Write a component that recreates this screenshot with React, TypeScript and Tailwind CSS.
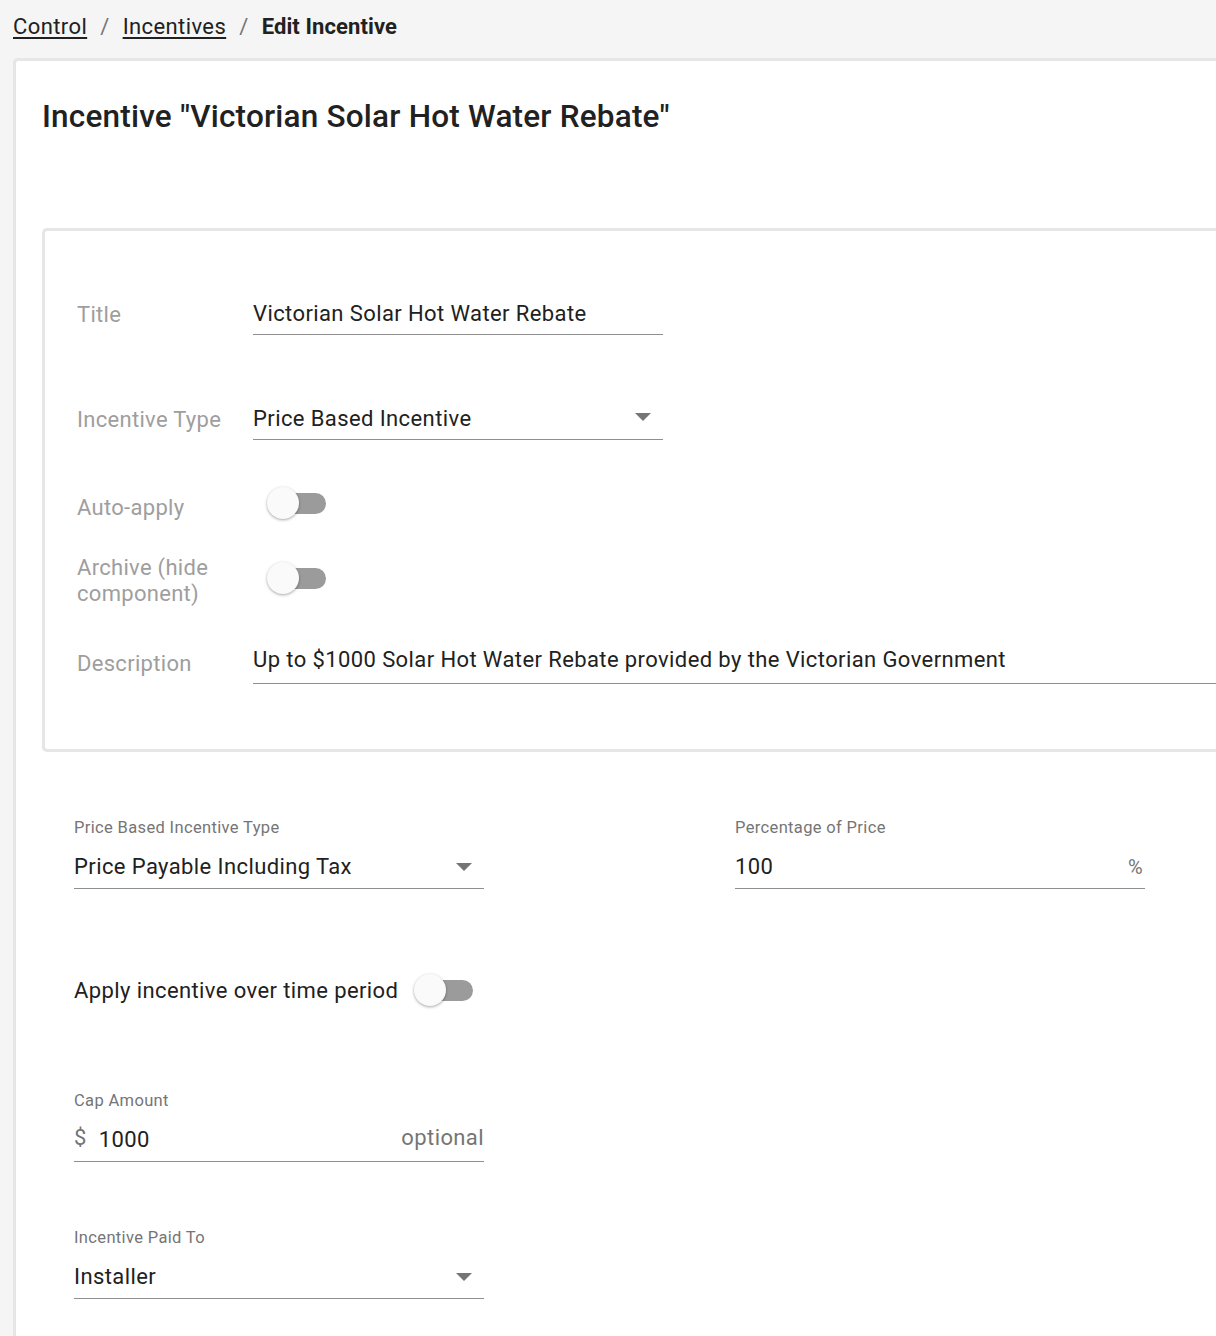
import React from 'react';

const Toggle: React.FC = () => (
  <div className="relative w-[60px] h-[32px] flex items-center">
    <div className="absolute left-[14px] w-[45px] h-[21px] rounded-full bg-[#9b9b9b]" />
    <div className="absolute left-0 w-[32px] h-[32px] rounded-full bg-[#fafafa] shadow-[0_1px_3px_rgba(0,0,0,0.35)]" />
  </div>
);

const Arrow: React.FC = () => (
  <svg width="16" height="8" viewBox="0 0 16 8" className="shrink-0">
    <path d="M0 0 L16 0 L8 8 Z" fill="#757575" />
  </svg>
);

const PanelRow: React.FC<{ label: React.ReactNode; className?: string; children: React.ReactNode }> = ({ label, className, children }) => (
  <div className={`flex items-center ${className ?? ''}`}>
    <div className="w-[176px] shrink-0 text-[22px] tracking-[0.3px] leading-[26px] text-[#9e9e9e]">{label}</div>
    {children}
  </div>
);

const SmallLabel: React.FC<{ children: React.ReactNode }> = ({ children }) => (
  <div className="text-[16.5px] tracking-[0.35px] leading-[20px] text-[#757575]">{children}</div>
);

export default function App() {
  return (
    <div className="min-h-screen overflow-hidden bg-[#f5f5f5] text-[#212121] font-['Roboto',sans-serif]">
      {/* Breadcrumb */}
      <div className="h-[58px] pl-[13px] pt-[13px] flex items-start gap-[13px] text-[22px] tracking-[0.4px] leading-[28px]">
        <span className="underline underline-offset-[3px]">Control</span>
        <span className="text-[#757575]">/</span>
        <span className="underline underline-offset-[3px]">Incentives</span>
        <span className="text-[#757575]">/</span>
        <span className="font-bold tracking-[0.1px]">Edit Incentive</span>
      </div>

      <div className="ml-[13px] w-[1260px] min-h-[1300px] bg-white border-t-[3px] border-l-[3px] border-[#e6e6e6] rounded-tl-[5px] pl-[26px] pt-[37px]">
        <h1 className="text-[31.5px] leading-[38px] font-medium tracking-[0.2px]">
          Incentive "Victorian Solar Hot Water Rebate"
        </h1>

        {/* Component panel */}
        <div className="mt-[92px] border-y-[3px] border-l-[3px] border-[#e6e6e6] rounded-l-[5px] pl-[32px] pt-[64px] pb-[65px]">
          <PanelRow label="Title">
            <div className="w-[410px] h-[40px] border-b border-[#8f8f8f] flex items-center pb-[2px] text-[22px] tracking-[0.4px]">
              Victorian Solar Hot Water Rebate
            </div>
          </PanelRow>

          <PanelRow label="Incentive Type" className="mt-[65px]">
            <div className="w-[410px] h-[40px] border-b border-[#8f8f8f] flex items-center justify-between pb-[2px] pr-[12px] text-[22px] tracking-[0.4px]">
              <span>Price Based Incentive</span>
              <span className="-mt-[4px]"><Arrow /></span>
            </div>
          </PanelRow>

          <PanelRow label="Auto-apply" className="mt-[48px] h-[40px]">
            <div className="ml-[14px] -mt-[10px]">
              <Toggle />
            </div>
          </PanelRow>

          <PanelRow label={<>Archive (hide<br />component)</>} className="mt-[26px] h-[54px]">
            <div className="ml-[14px] -mt-[6px]">
              <Toggle />
            </div>
          </PanelRow>

          <PanelRow label="Description" className="mt-[35px]">
            <div className="flex-1 h-[41px] border-b border-[#8f8f8f] flex items-start text-[22px] tracking-[0.4px]">
              Up to $1000 Solar Hot Water Rebate provided by the Victorian Government
            </div>
          </PanelRow>
        </div>

        {/* Price based settings */}
        <div className="pl-[32px] pt-[66px]">
          <div className="flex gap-[251px]">
            <div className="w-[410px]">
              <SmallLabel>Price Based Incentive Type</SmallLabel>
              <div className="h-[51px] border-b border-[#8f8f8f] flex items-end justify-between pb-[5px] pr-[12px] text-[22px] tracking-[0.4px]">
                <span>Price Payable Including Tax</span>
                <span className="mb-[12px]"><Arrow /></span>
              </div>
            </div>
            <div className="w-[410px]">
              <SmallLabel>Percentage of Price</SmallLabel>
              <div className="h-[51px] border-b border-[#8f8f8f] flex items-end justify-between pb-[5px] pr-[2px] text-[22px] tracking-[0.4px]">
                <span>100</span>
                <span className="text-[#757575] mb-[1px] text-[20px]">%</span>
              </div>
            </div>
          </div>

          <div className="mt-[81px] h-[40px] flex items-center gap-[16px]">
            <span className="text-[22px] tracking-[0.4px]">Apply incentive over time period</span>
            <Toggle />
          </div>

          <div className="mt-[81px] w-[410px]">
            <SmallLabel>Cap Amount</SmallLabel>
            <div className="h-[51px] border-b border-[#8f8f8f] flex items-end pb-[5px] text-[22px] tracking-[0.4px]">
              <span className="text-[#757575] mb-[2px]">$</span>
              <span className="ml-[12px] flex-1">1000</span>
              <span className="text-[#757575] mb-[2px]">optional</span>
            </div>
          </div>

          <div className="mt-[66px] w-[410px]">
            <SmallLabel>Incentive Paid To</SmallLabel>
            <div className="h-[51px] border-b border-[#8f8f8f] flex items-end justify-between pb-[5px] pr-[12px] text-[22px] tracking-[0.4px]">
              <span>Installer</span>
              <span className="mb-[12px]"><Arrow /></span>
            </div>
          </div>
        </div>
      </div>
    </div>
  );
}
